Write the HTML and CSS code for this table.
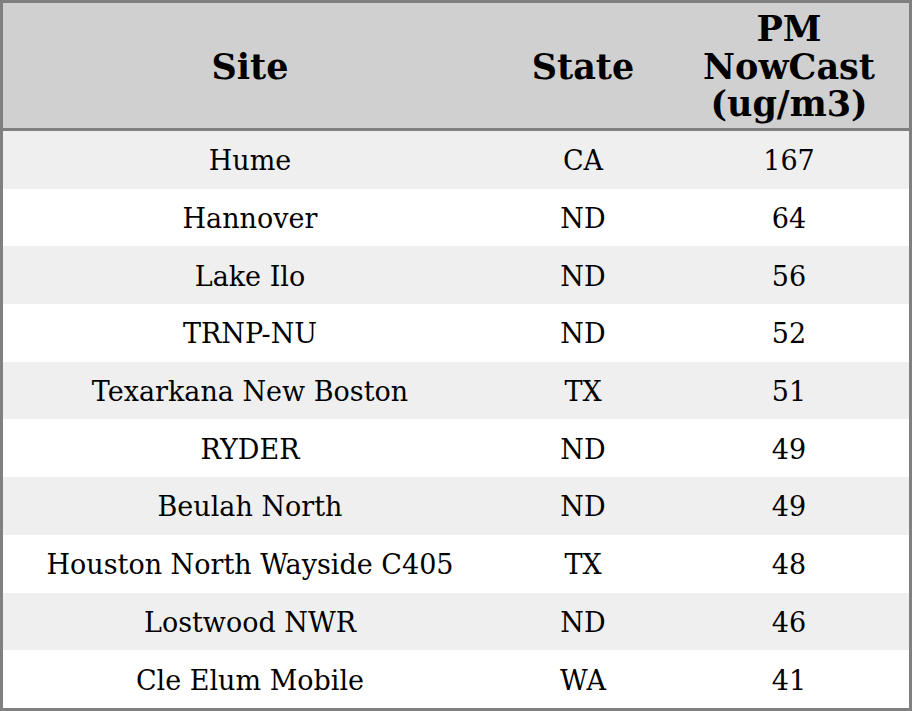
FILE: index.html
```html
<!DOCTYPE html>
<html>
<head>
<meta charset="utf-8">
<link rel="stylesheet" href="styles.css">
</head>
<body>
<table class="data">
  <colgroup>
    <col class="c-site">
    <col class="c-state">
    <col class="c-pm">
  </colgroup>
  <thead>
    <tr><th>Site</th><th>State</th><th>PM<br>NowCast<br>(ug/m3)</th></tr>
  </thead>
  <tbody>
    <tr><td>Hume</td><td>CA</td><td>167</td></tr>
    <tr><td>Hannover</td><td>ND</td><td>64</td></tr>
    <tr><td>Lake Ilo</td><td>ND</td><td>56</td></tr>
    <tr><td>TRNP-NU</td><td>ND</td><td>52</td></tr>
    <tr><td>Texarkana New Boston</td><td>TX</td><td>51</td></tr>
    <tr><td>RYDER</td><td>ND</td><td>49</td></tr>
    <tr><td>Beulah North</td><td>ND</td><td>49</td></tr>
    <tr><td>Houston North Wayside C405</td><td>TX</td><td>48</td></tr>
    <tr><td>Lostwood NWR</td><td>ND</td><td>46</td></tr>
    <tr><td>Cle Elum Mobile</td><td>WA</td><td>41</td></tr>
  </tbody>
</table>
</body>
</html>
```
FILE: styles.css
```css
html, body {
  margin: 0;
  padding: 0;
  background: #ffffff;
}
.data {
  width: 912px;
  border: 3px solid #808080;
  border-collapse: separate;
  border-spacing: 0;
  table-layout: fixed;
  font-family: "DejaVu Serif", serif;
  color: #000;
}
.c-site { width: 494px; }
.c-state { width: 172px; }
.c-pm { width: 240px; }
.data th {
  background: #d0d0d0;
  font-size: 35px;
  font-weight: bold;
  line-height: 37.5px;
  height: 128px;
  padding: 2px 0 0 0;
  box-sizing: border-box;
  text-align: center;
  vertical-align: middle;
  border-bottom: 3px solid #808080;
}
.data td {
  font-size: 27px;
  line-height: 31px;
  height: 57.7px;
  padding: 2px 0 0 0;
  box-sizing: border-box;
  text-align: center;
  vertical-align: middle;
}
.data tbody tr:nth-child(odd) td {
  background: #efefef;
}
.data tbody tr:nth-child(even) td {
  background: #ffffff;
}
```
